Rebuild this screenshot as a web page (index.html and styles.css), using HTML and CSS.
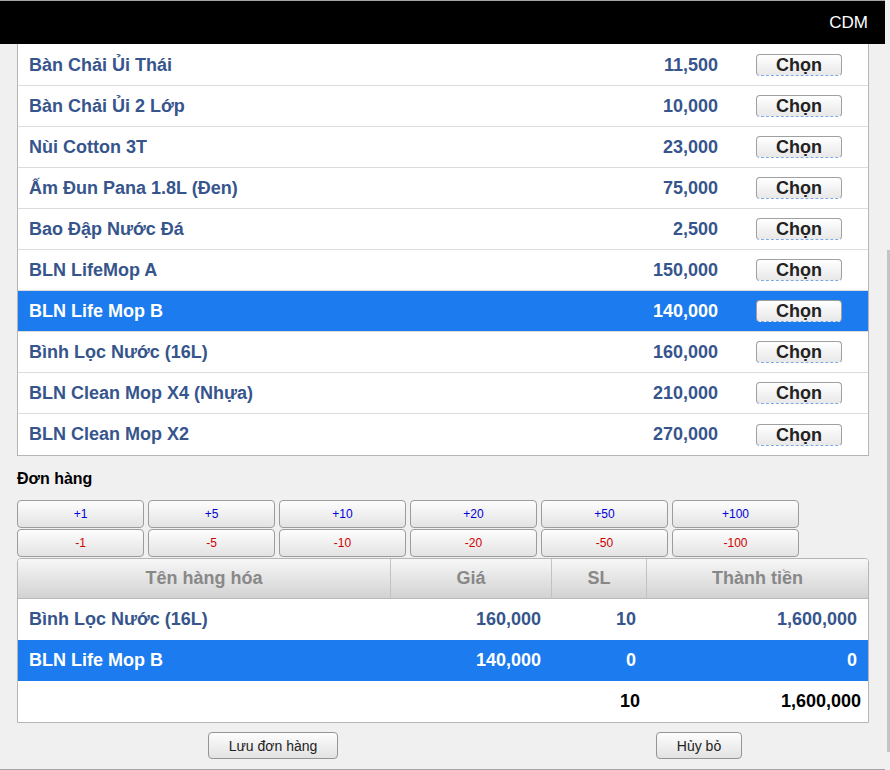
FILE: index.html
```html
<!DOCTYPE html>
<html lang="vi">
<head>
<meta charset="utf-8">
<title>CDM</title>
<link rel="stylesheet" href="styles.css">
</head>
<body>
<div class="app">
  <header class="topbar"><span class="brand">CDM</span></header>

  <div class="products">
    <div class="prow"><span class="pname">Bàn Chải Ủi Thái</span><span class="pprice">11,500</span><button class="pick">Chọn</button></div>
    <div class="prow"><span class="pname">Bàn Chải Ủi 2 Lớp</span><span class="pprice">10,000</span><button class="pick">Chọn</button></div>
    <div class="prow"><span class="pname">Nùi Cotton 3T</span><span class="pprice">23,000</span><button class="pick">Chọn</button></div>
    <div class="prow"><span class="pname">Ấm Đun Pana 1.8L (Đen)</span><span class="pprice">75,000</span><button class="pick">Chọn</button></div>
    <div class="prow"><span class="pname">Bao Đập Nước Đá</span><span class="pprice">2,500</span><button class="pick">Chọn</button></div>
    <div class="prow"><span class="pname">BLN LifeMop A</span><span class="pprice">150,000</span><button class="pick">Chọn</button></div>
    <div class="prow selected"><span class="pname">BLN Life Mop B</span><span class="pprice">140,000</span><button class="pick">Chọn</button></div>
    <div class="prow"><span class="pname">Bình Lọc Nước (16L)</span><span class="pprice">160,000</span><button class="pick">Chọn</button></div>
    <div class="prow"><span class="pname">BLN Clean Mop X4 (Nhựa)</span><span class="pprice">210,000</span><button class="pick">Chọn</button></div>
    <div class="prow"><span class="pname">BLN Clean Mop X2</span><span class="pprice">270,000</span><button class="pick">Chọn</button></div>
  </div>

  <div class="section-title">Đơn hàng</div>

  <div class="qty-grid">
    <button class="qty plus">+1</button>
    <button class="qty plus">+5</button>
    <button class="qty plus">+10</button>
    <button class="qty plus">+20</button>
    <button class="qty plus">+50</button>
    <button class="qty plus">+100</button>
    <button class="qty minus">-1</button>
    <button class="qty minus">-5</button>
    <button class="qty minus">-10</button>
    <button class="qty minus">-20</button>
    <button class="qty minus">-50</button>
    <button class="qty minus">-100</button>
  </div>

  <div class="order">
    <div class="orow ohead">
      <div class="oc">Tên hàng hóa</div>
      <div class="oc">Giá</div>
      <div class="oc">SL</div>
      <div class="oc">Thành tiền</div>
    </div>
    <div class="orow obody">
      <div class="oc name">Bình Lọc Nước (16L)</div>
      <div class="oc num">160,000</div>
      <div class="oc num">10</div>
      <div class="oc num">1,600,000</div>
    </div>
    <div class="orow obody selected">
      <div class="oc name">BLN Life Mop B</div>
      <div class="oc num">140,000</div>
      <div class="oc num">0</div>
      <div class="oc num">0</div>
    </div>
    <div class="orow ofoot">
      <div class="oc"></div>
      <div class="oc"></div>
      <div class="oc num">10</div>
      <div class="oc num">1,600,000</div>
    </div>
  </div>

  <div class="actions">
    <div class="act-cell"><button class="act">Lưu đơn hàng</button></div>
    <div class="act-cell"><button class="act">Hủy bỏ</button></div>
  </div>

  <div class="scroll-thumb"></div>
</div>
</body>
</html>
```

FILE: styles.css
```css
* { box-sizing: border-box; }

html, body {
  margin: 0;
  padding: 0;
  background: #f0f0f0;
  font-family: "Liberation Sans", Arial, sans-serif;
}

.app {
  position: relative;
  width: 885px;
  height: 770px;
  border-top: 1px solid #a3a3a3;
  border-bottom: 1px solid #a3a3a3;
  background: #f0f0f0;
}

.topbar {
  height: 43px;
  background: #000;
  display: flex;
  align-items: center;
  justify-content: flex-end;
  padding-right: 17px;
}

.brand {
  color: #fff;
  font-size: 17px;
  line-height: 20px;
}

.products {
  margin-left: 17px;
  width: 852px;
  padding-top: 1px;
  background: #fff;
  border-left: 1px solid #b5b5b5;
  border-right: 1px solid #b5b5b5;
  border-bottom: 1px solid #b5b5b5;
}

.prow {
  display: grid;
  grid-template-columns: 1fr auto 86px;
  align-items: center;
  height: 41px;
  padding: 0 26px 0 11px;
  border-bottom: 1px solid #dcdcdc;
  color: #36558c;
  font-size: 18px;
  font-weight: bold;
}

.prow:last-child { border-bottom: none; }

.prow.selected {
  background: #1b7bef;
  color: #fff;
}

.pprice {
  margin-right: 38px;
  text-align: right;
}

.pick {
  width: 86px;
  height: 22px;
  padding: 0;
  font-family: "Liberation Sans", Arial, sans-serif;
  font-size: 18px;
  font-weight: bold;
  line-height: 20px;
  color: #222;
  background: linear-gradient(#ffffff, #e8e8e8);
  border: 1px solid #a0a0a0;
  border-bottom: 1px dashed #7fa8e2;
  border-radius: 4px;
}

.section-title {
  margin: 14px 0 12px 17px;
  font-size: 16px;
  line-height: 18px;
  font-weight: bold;
  color: #000;
}

.qty-grid {
  margin-left: 17px;
  display: grid;
  grid-template-columns: repeat(6, 127px);
  column-gap: 4px;
  row-gap: 1px;
}

.qty {
  height: 28px;
  padding: 0;
  font-family: "Liberation Sans", Arial, sans-serif;
  font-size: 12px;
  background: linear-gradient(#fdfdfd, #e3e3e3);
  border: 1px solid #9c9c9c;
  border-radius: 4px;
}

.qty.plus { color: #0000d8; }
.qty.minus { color: #d00000; }

.order {
  margin: 1px 0 0 17px;
  width: 852px;
  background: #fff;
  border: 1px solid #b5b5b5;
  border-radius: 4px 4px 0 0;
  overflow: hidden;
}

.orow {
  display: grid;
  grid-template-columns: 372px 161px 95px 1fr;
  height: 41px;
  align-items: center;
  font-size: 18px;
  font-weight: bold;
}

.ohead {
  height: 40px;
  align-items: stretch;
  background: linear-gradient(#f7f7f7, #d2d2d2);
  border-bottom: 1px solid #b8b8b8;
  color: #888;
}

.ohead .oc {
  display: flex;
  align-items: center;
  justify-content: center;
}

.ohead .oc + .oc { border-left: 1px solid #c2c2c2; }

.obody { color: #36558c; }

.obody.selected {
  background: #1b7bef;
  color: #fff;
}

.obody .name { padding-left: 11px; }

.obody .num {
  text-align: right;
  padding-right: 10px;
}

.obody .num:last-child { padding-right: 11px; }

.ofoot { color: #000; }

.ofoot .num {
  text-align: right;
  padding-right: 6px;
}

.ofoot .num:last-child { padding-right: 7px; }

.actions {
  margin: 9px 0 0 17px;
  width: 852px;
  display: grid;
  grid-template-columns: 426px 426px;
}

.act-cell {
  display: flex;
  justify-content: center;
  padding-left: 86px;
}

.act {
  height: 27px;
  padding: 0 20px;
  font-family: "Liberation Sans", Arial, sans-serif;
  font-size: 14px;
  color: #222;
  background: linear-gradient(#fdfdfd, #e2e2e2);
  border: 1px solid #959595;
  border-radius: 4px;
}

.scroll-thumb {
  position: absolute;
  left: 887px;
  top: 249px;
  width: 3px;
  height: 502px;
  background: #c4c4c4;
}
```
